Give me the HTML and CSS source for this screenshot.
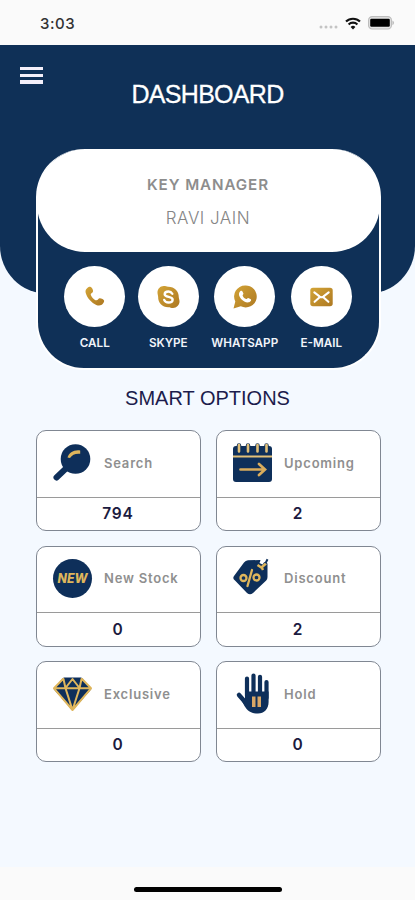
FILE: index.html
```html
<!DOCTYPE html>
<html lang="en">
<head>
  <meta charset="UTF-8" />
  <meta name="viewport" content="width=device-width, initial-scale=1.0"/>
  <title>Dashboard</title>
  <link rel="stylesheet" href="styles.css">
</head>
<body>
  <!-- STATUS BAR -->
  <div class="status-bar">
    <span class="time">3:03</span>
    <div class="status-icons">
      <svg width="19" height="4" viewBox="0 0 19 4" fill="#c4c4c4"><circle cx="2" cy="2" r="1.5"/><circle cx="7" cy="2" r="1.5"/><circle cx="12" cy="2" r="1.5"/><circle cx="17" cy="2" r="1.5"/></svg>
      <svg class="wifi" width="16" height="13" viewBox="0 0 16 13" fill="none" stroke="#111" stroke-width="2.1"><path d="M1 4.6a10 10 0 0 1 14 0"/><path d="M3.6 7.4a6.3 6.3 0 0 1 8.8 0"/><path d="M8 12.6L5.6 10a3.4 3.4 0 0 1 4.8 0z" fill="#111" stroke="none"/></svg>
      <svg width="27" height="14" viewBox="0 0 27 14"><rect x=".6" y=".6" width="22.8" height="12.4" rx="3.6" fill="#e6e6e6" stroke="#bdbdbd" stroke-width="1.2"/><rect x="2.2" y="2.8" width="19.6" height="8" rx="1.2" fill="#000"/><path d="M24.4 4.6c2.2 1 2.2 3.6 0 4.6z" fill="#bdbdbd"/></svg>
    </div>
  </div>

  <main class="content">
    <header class="header">
      <button class="menu" aria-label="Menu"><span></span><span></span><span></span></button>
      <h1>DASHBOARD</h1>
    </header>

    <!-- KEY MANAGER -->
    <section class="manager">
      <div class="manager-info">
        <h2>KEY MANAGER</h2>
        <p>RAVI JAIN</p>
      </div>
      <div class="contacts">
        <a class="contact">
          <span class="circle">
            <svg width="20" height="21" viewBox="0 0 22 22"><defs><linearGradient id="gold" x1="0" y1="0" x2="1" y2="1"><stop offset="0" stop-color="#d3a436"/><stop offset="1" stop-color="#ad7822"/></linearGradient></defs><path fill="url(#gold)" d="M2.3 1.8C4.2.4 6-.2 7.1 1c1.2 1.4 2.4 3.500 1.500 5C7.900 7.100 6.300 7.500 6.300 8.700c.3 2.300 4 6.300 6.200 6.500 1.300.1 1.700-1.300 2.900-2 1.400-.8 3.800.3 5.200 1.600 1 1 .2 2.800-1 4.300-1.400 1.900-4.400 2.400-7.200 1.200C7.300 18.200 2.300 12.700.8 7.200.2 4.900.7 3 2.300 1.800z"/></svg>
          </span>
          <span class="label">CALL</span>
        </a>
        <a class="contact">
          <span class="circle">
            <svg width="23" height="24" viewBox="0 0 24 24"><path fill="url(#gold)" d="M7 .5c2 0 3 .7 4.500.7C17.800 1 23 5.500 22.700 12c0 1.700.8 2.700.8 4.500 0 4-3 7-6.800 7-2 0-3-.8-4.700-.8C5.700 22.900 1 18.200 1.200 12c0-1.700-.7-2.900-.7-4.800C.5 3.500 3.500.5 7 .5z"/><path d="M16 8.600C15 6.900 13.700 6.200 12 6.200c-2.300 0-4 1.100-4 2.900 0 3.800 8.300 1.900 8.300 5.700 0 1.900-1.900 3-4.300 3-2 0-3.700-.9-4.500-2.800" fill="none" stroke="#fff" stroke-width="2.500" stroke-linecap="round"/></svg>
          </span>
          <span class="label">SKYPE</span>
        </a>
        <a class="contact">
          <span class="circle">
            <svg width="23" height="24" viewBox="0 0 23 24"><path fill="url(#gold)" d="M12 .5a11 11 0 1 1-4.200 20.800L.5 23.500 2.300 16.500A11 11 0 0 1 12 .5z"/><path d="M7.200 6.300c1-.8 1.900-.6 2.400.4l.8 1.900c.2.700-.8 1.400-.8 2 .3 1.500 2 3 3.600 3.500.8.100 1.300-1.200 2-1.100l2.200 1c1 .6.900 1.500.1 2.300-1.500 1.600-4 1.400-6.200.2-2.500-1.400-4.400-3.500-5.100-5.700-.5-1.800-.2-3.400 1-4.500z" fill="#fff"/></svg>
          </span>
          <span class="label">WHATSAPP</span>
        </a>
        <a class="contact">
          <span class="circle">
            <svg width="23" height="20" viewBox="0 0 24 20"><rect x=".3" y=".3" width="23.400" height="19.400" rx="2.800" fill="url(#gold)"/><path d="M4.500 5.200l5.700 4.400q1.800 1.300 3.600 0L19.500 5.200M4.800 15l4.700-4.300M19.200 15l-4.700-4.300" fill="none" stroke="#fff" stroke-width="2.200" stroke-linecap="round"/></svg>
          </span>
          <span class="label">E-MAIL</span>
        </a>
      </div>
    </section>

    <h3 class="title">SMART OPTIONS</h3>

    <!-- SMART OPTIONS -->
    <section class="options">
      <div class="card">
        <div class="card-top">
          <svg width="40" height="40" viewBox="0 0 40 40"><path d="M3.500 34.500L14 24.500" stroke="#0e2f5a" stroke-width="6" stroke-linecap="round"/><circle cx="22.500" cy="16" r="14.800" fill="#0e2f5a"/><path d="M14.500 14.500c1.500-4.800 6.500-8 12.700-7v3.200c-5-.4-8 .8-10.200 4.300z" fill="#dfb65c"/></svg>
          <span>Search</span>
        </div>
        <div class="card-value">794</div>
      </div>
      <div class="card">
        <div class="card-top">
          <svg width="40" height="40" viewBox="0 0 40 40"><rect x="0" y="3" width="39" height="36" rx="3" fill="#0e2f5a"/><path d="M0 13.500h39" stroke="#e2c078" stroke-width="2"/><path d="M6 2.500v5M15 2.500v5M24.500 2.500v5M33.500 2.500v5" stroke="#0e2f5a" stroke-width="4.500" stroke-linecap="round"/><path d="M6 2v6.400M15 2v6.400M24.500 2v6.400M33.500 2v6.400" stroke="#e2c078" stroke-width="2.600" stroke-linecap="round"/><path d="M7.500 26.500H31M26 21l6 5.500-6 5.500" fill="none" stroke="#d9ac5c" stroke-width="2.700" stroke-linecap="round"/></svg>
          <span>Upcoming</span>
        </div>
        <div class="card-value">2</div>
      </div>
      <div class="card">
        <div class="card-top">
          <svg width="40" height="40" viewBox="0 0 40 40"><circle cx="19.500" cy="19.500" r="19.500" fill="#0e2f5a"/><text x="19.500" y="24.200" class="new-text" textLength="30" lengthAdjust="spacingAndGlyphs">NEW</text></svg>
          <span>New Stock</span>
        </div>
        <div class="card-value">0</div>
      </div>
      <div class="card">
        <div class="card-top">
          <svg width="40" height="40" viewBox="0 0 40 40"><path d="M1 17L11 3.500Q12.500 1.500 15 1.300L27 1 34.500 4.500V18Q34.500 20 33.200 21.500L20 34Q17 36.500 14 34L2 21.500Q-.8 19.500 1 17z" fill="#0e2f5a"/><circle cx="10.500" cy="19" r="3" fill="none" stroke="#dfb65c" stroke-width="2.300"/><circle cx="23.500" cy="18.500" r="3" fill="none" stroke="#dfb65c" stroke-width="2.300"/><path d="M19 11L14.500 27" stroke="#dfb65c" stroke-width="2.300" stroke-linecap="round"/><path d="M24.500 6l4.500 3M29 8l4-3.500M28.500 8l1.500 3" stroke="#dfb65c" stroke-width="2.500"/><path d="M32.500 4.200l2-4" stroke="#0e2f5a" stroke-width="2"/><path d="M26.500 4l3 1.500L32 2 28 0z" fill="#fff"/></svg>
          <span>Discount</span>
        </div>
        <div class="card-value">2</div>
      </div>
      <div class="card">
        <div class="card-top">
          <svg width="40" height="40" viewBox="0 0 40 40"><path d="M10.500 4h18l9.500 11L19.500 36 1 15z" fill="#0e2f5a" stroke="#0e2f5a" stroke-linejoin="round"/><path d="M1 14.300h37M10.500 5l2 9.300L19.500 36l7-21.700L28.500 5M1 14.300L19.500 36 38 14.300M1 14.300L10 5M38 14.300L29 5M12.500 14L19.500 5l7 9" fill="none" stroke="#dfb65c" stroke-width="2" stroke-linejoin="round" stroke-linecap="round"/></svg>
          <span>Exclusive</span>
        </div>
        <div class="card-value">0</div>
      </div>
      <div class="card">
        <div class="card-top">
          <svg width="40" height="40" viewBox="0 0 40 40"><g fill="none" stroke="#0e2f5a" stroke-width="4.200" stroke-linecap="round"><path d="M14 22V4.500M20.500 22V1.500M27 22V2.800M33.500 24V8"/><path d="M6 21L13 29" stroke-width="4.500"/></g><path d="M12 17.500H35.600V28C35.600 35 31 39.500 25 39.500 18 39.500 14.500 37 11.500 32L8 25.500 12 25.500z" fill="#0e2f5a"/><path d="M19 22.500h3.500v10.500H19zM24.500 22.500H28v10.500h-3.500z" fill="#d9a766"/></svg>
          <span>Hold</span>
        </div>
        <div class="card-value">0</div>
      </div>
    </section>
  </main>

  <footer class="home-bar"><span></span></footer>
</body>
</html>
```
FILE: styles.css
```css
* {
  box-sizing: border-box;
}

body {
  margin: 0;
  height: 900px;
  display: flex;
  flex-direction: column;
  overflow: hidden;
  background-color: #fafafa;
  font-family: Inter, Arial, sans-serif;
}

h1, h2, h3, p {
  margin: 0;
}

svg {
  display: block;
  flex: none;
  overflow: visible;
}

.status-bar {
  height: 45px;
  flex: none;
  display: flex;
  justify-content: space-between;
  padding: 15px 20px 0 40px;
}

.time {
  font-size: 15px;
  line-height: 17px;
  font-weight: 500;
  letter-spacing: 0.5px;
  color: #333;
}

.status-icons {
  display: flex;
  height: 16px;
  align-items: center;
  gap: 7px;
}

.status-icons svg:first-child {
  margin-top: 8px;
}

.content {
  flex: 1;
  background-color: #f4f9ff;
}

.header {
  height: 249px;
  padding: 22px 20px 0;
  background-color: #0f3057;
  border-radius: 0 0 48px 48px;
}

.menu {
  display: flex;
  flex-direction: column;
  gap: 3.5px;
  width: 23px;
  padding: 0;
  border: none;
  background: none;
}

.menu span {
  height: 3.2px;
  background-color: #f3effa;
}

.header h1 {
  margin-top: -4px;
  font-family: "Liberation Sans", Arial, sans-serif;
  font-size: 25px;
  line-height: 28px;
  font-weight: normal;
  letter-spacing: -0.7px;
  text-align: center;
  color: #fff;
  -webkit-text-stroke: 0.3px #fff;
}

.manager {
  width: 345px;
  height: 221px;
  margin: -145px 0 0 35.5px;
  border: 2.5px solid #fff;
  border-top: none;
  border-radius: 48px;
  background-color: #0f3057;
}

.manager-info {
  height: 103px;
  margin: 0 -1px;
  padding-top: 27px;
  border-radius: 48px;
  background-color: #fff;
  text-align: center;
}

.manager-info h2 {
  font-size: 15.2px;
  line-height: 18px;
  font-weight: 600;
  letter-spacing: 0.9px;
  color: #8d8d8d;
}

.manager-info p {
  margin-top: 14px;
  font-size: 17px;
  line-height: 20px;
  font-weight: 300;
  letter-spacing: 0.5px;
  color: #858585;
}

.contacts {
  display: flex;
  justify-content: center;
  gap: 12.5px;
  padding-top: 14px;
}

.contact {
  display: flex;
  flex-direction: column;
  align-items: center;
}

.circle {
  width: 61px;
  height: 61px;
  display: flex;
  align-items: center;
  justify-content: center;
  border-radius: 50%;
  background-color: #fff;
}

.label {
  margin-top: 9px;
  font-size: 11.7px;
  line-height: 15px;
  font-weight: 600;
  color: #f1f4fa;
}

.title {
  margin-top: 16px;
  font-family: "Liberation Sans", Arial, sans-serif;
  font-size: 20px;
  line-height: 24px;
  font-weight: normal;
  text-align: center;
  color: #1c1c4c;
}

.options {
  display: grid;
  grid-template-columns: 165px 165px;
  justify-content: center;
  gap: 14.6px 15px;
  padding: 20px 0 0 1px;
}

.card {
  height: 101px;
  border: 1px solid #808792;
  border-radius: 10px;
  background-color: #fff;
}

.card-top {
  height: 66.5px;
  display: flex;
  padding: 12px 0 0 16.5px;
  gap: 11px;
  border-bottom: 1px solid #9a9a9a;
}

.card-top span {
  padding-top: 10.5px;
  font-size: 13px;
  line-height: 18px;
  font-weight: 600;
  letter-spacing: 0.8px;
  color: #8f8f8f;
}

.card-value {
  padding-top: 7.5px;
  font-size: 15.5px;
  line-height: 18px;
  font-weight: 600;
  letter-spacing: 0.8px;
  text-align: center;
  color: #1b1b40;
}

.new-text {
  font-family: Inter, Arial, sans-serif;
  font-size: 12.5px;
  font-weight: 800;
  font-style: italic;
  text-anchor: middle;
  fill: #dfb65c;
}

.home-bar {
  height: 33px;
  flex: none;
  display: flex;
  justify-content: center;
  padding-top: 20px;
}

.home-bar span {
  width: 148px;
  height: 4.5px;
  border-radius: 3px;
  background-color: #000;
}
```
